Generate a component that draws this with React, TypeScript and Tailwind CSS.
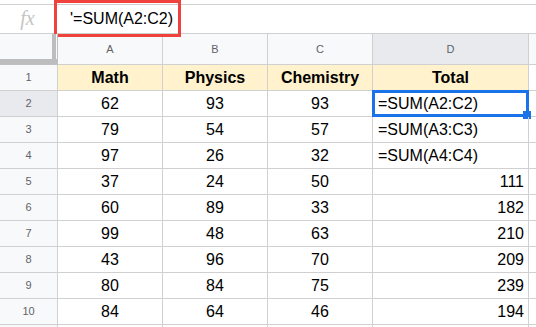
import * as React from "react";

const rows: [number, number, number, string][] = [
  [62, 93, 93, "=SUM(A2:C2)"],
  [79, 54, 57, "=SUM(A3:C3)"],
  [97, 26, 32, "=SUM(A4:C4)"],
  [37, 24, 50, "111"],
  [60, 89, 33, "182"],
  [99, 48, 63, "210"],
  [43, 96, 70, "209"],
  [80, 84, 75, "239"],
  [84, 64, 46, "194"],
];

const line = "border-r border-b border-[#d0d0d0]";

export default function App() {
  return (
    <div className="relative w-[536px] h-[327px] overflow-hidden bg-white font-['Liberation_Sans',Arial,sans-serif] text-[16px] text-black">
      {/* formula bar */}
      <div className="mt-[4px] flex h-[30px] border-t border-b border-[#d0d0d0]">
        <div className="flex w-[55px] items-center justify-center pb-[2px] font-['Liberation_Serif',serif] text-[20px] italic text-[#c4c4c4]">
          fx
        </div>
        <div className="flex items-center pl-[15px] pb-[1px]">'=SUM(A2:C2)</div>
      </div>

      {/* red annotation */}
      <div className="absolute left-[54px] top-0 h-[37px] w-[127px] border-[3px] border-[#f0423d]" />

      {/* sheet */}
      <div className="grid grid-cols-[58px_105px_105px_105px_156px_1fr] auto-rows-[26px] grid-rows-[31px]">
        {/* header row */}
        <div className="relative border-r border-b border-[#c0c0c0] bg-[#f8f9fa]">
          <div className="absolute right-[1px] top-0 h-full w-[4px] bg-[#bdbdbd]" />
          <div className="absolute bottom-0 left-0 h-[5px] w-full bg-[#bdbdbd]" />
        </div>
        {["A", "B", "C"].map((c) => (
          <div key={c} className={`${line} flex items-center justify-center bg-[#f8f9fa] text-[11px] text-[#5f6368]`}>
            {c}
          </div>
        ))}
        <div className={`${line} flex items-center justify-center bg-[#e8eaed] text-[11px] text-[#5f6368]`}>D</div>
        <div className="border-b border-[#d0d0d0] bg-[#f8f9fa]" />

        {/* row 1 */}
        <div className={`${line} flex items-center justify-center bg-[#f8f9fa] text-[11px] text-[#5f6368]`}>1</div>
        {["Math", "Physics", "Chemistry", "Total"].map((h) => (
          <div key={h} className={`${line} flex items-center justify-center bg-[#fff2cc] font-bold`}>
            {h}
          </div>
        ))}
        <div className="border-b border-[#d0d0d0]" />

        {rows.map((r, i) => {
          const n = i + 2;
          const isFormula = r[3].startsWith("=");
          return (
            <React.Fragment key={n}>
              <div
                className={`${line} flex items-center justify-center text-[11px] text-[#5f6368] ${
                  n === 2 ? "bg-[#e8eaed]" : "bg-[#f8f9fa]"
                }`}
              >
                {n}
              </div>
              {r.slice(0, 3).map((v, j) => (
                <div key={j} className={`${line} flex items-center justify-center`}>
                  {v}
                </div>
              ))}
              <div
                className={`${line} relative flex items-center ${
                  isFormula ? "justify-start pl-[5px]" : "justify-end pr-[4px]"
                }`}
              >
                {r[3]}
                {n === 2 && (
                  <>
                    <div className="absolute -left-[1px] -top-[1px] h-[27px] w-[157px] border-[3px] border-[#1a73e8]" />
                    <div className="absolute -bottom-[3px] -right-[3px] h-[8px] w-[8px] bg-[#1a73e8]" />
                  </>
                )}
              </div>
              <div className="border-b border-[#d0d0d0]" />
            </React.Fragment>
          );
        })}

        {/* row 11 sliver */}
        <div className={`${line} bg-[#f8f9fa]`} />
        <div className={line} />
        <div className={line} />
        <div className={line} />
        <div className={line} />
        <div className="border-b border-[#d0d0d0]" />
      </div>
    </div>
  );
}
